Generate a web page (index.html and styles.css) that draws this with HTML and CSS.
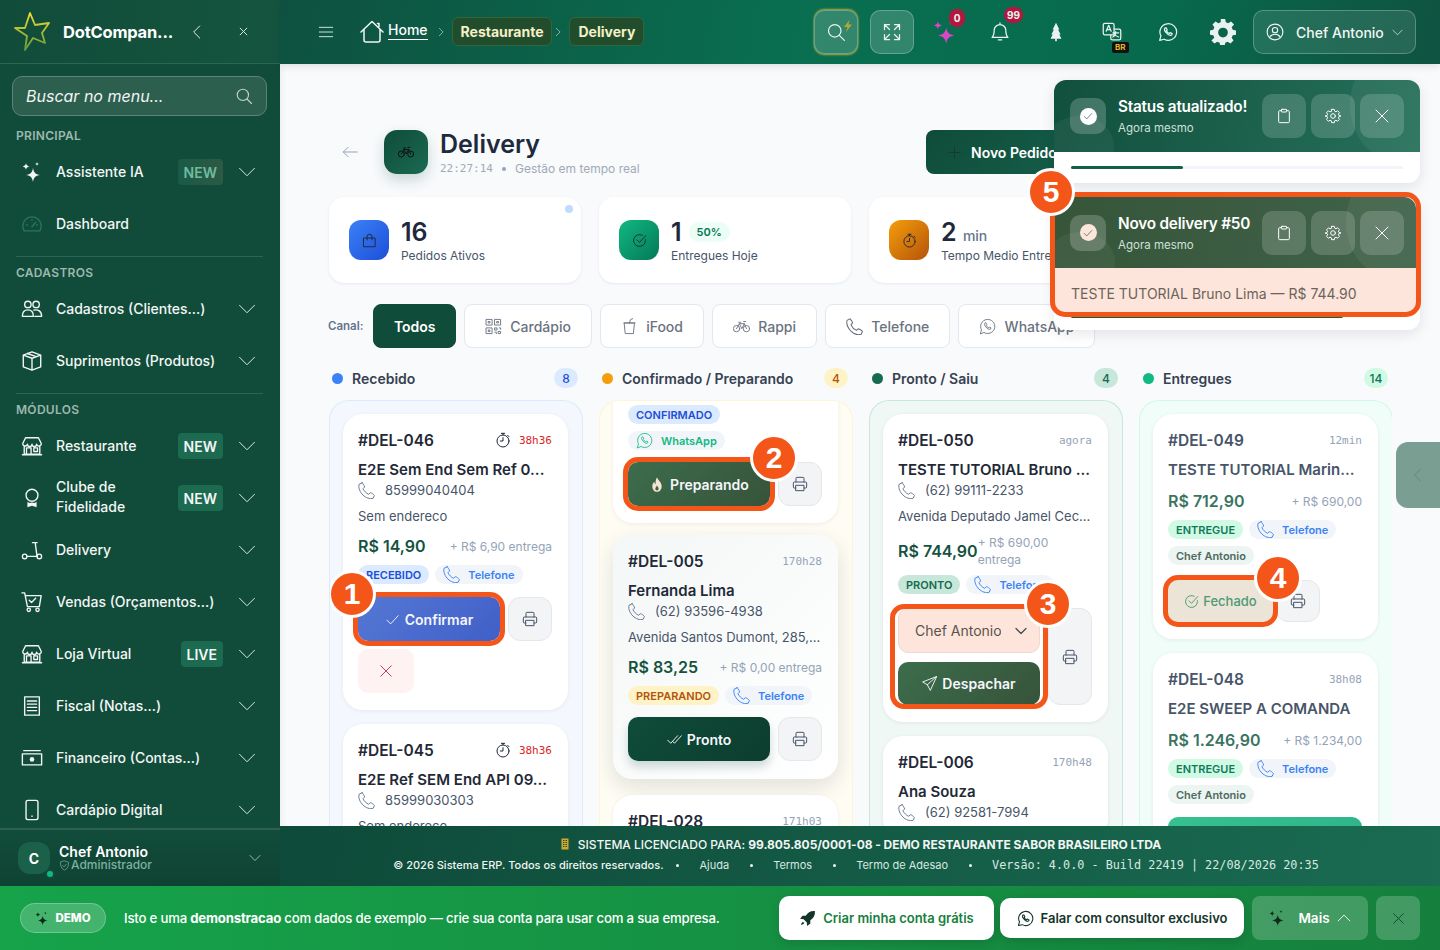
FILE: index.html
```html
<!DOCTYPE html>
<html lang="pt-BR">
<head>
    <meta charset="UTF-8">
    <meta name="viewport" content="width=device-width, initial-scale=1.0">
    <title>Delivery</title>
    <link rel="stylesheet" href="styles.css">
</head>
<body>
<svg class="sprite" xmlns="http://www.w3.org/2000/svg">
    <symbol id="i-search" viewBox="0 0 24 24"><circle cx="10.5" cy="10.5" r="7.5"/><path d="M16 16l6 6"/></symbol>
    <symbol id="i-down" viewBox="0 0 24 24"><path d="M2 7l10 10L22 7"/></symbol>
    <symbol id="i-left" viewBox="0 0 24 24"><path d="M16 3l-9 9 9 9"/></symbol>
    <symbol id="i-right" viewBox="0 0 24 24"><path d="M8 3l9 9-9 9"/></symbol>
    <symbol id="i-up" viewBox="0 0 24 24"><path d="M2 17L12 7l10 10"/></symbol>
    <symbol id="i-x" viewBox="0 0 24 24"><path d="M3 3l18 18M21 3L3 21"/></symbol>
    <symbol id="i-bolt" viewBox="0 0 24 24"><path class="solid" d="M15 0L4 14h7l-3 10 12-15h-7z"/></symbol>
    <symbol id="i-spark" viewBox="2 0 20 22"><path class="solid" d="M13 7c.8 4.6 2.4 6.2 7 7-4.6.8-6.2 2.4-7 7-.8-4.6-2.4-6.2-7-7 4.600-.8 6.200-2.400 7-7zM6 2c.4 2.200 1.200 3 3.400 3.400C7.200 5.800 6.400 6.600 6 8.800c-.4-2.200-1.200-3-3.400-3.400C4.800 5 5.600 4.200 6 2zM17 1c.3 1.400.7 1.800 2 2-1.300.2-1.700.6-2 2-.3-1.400-.7-1.800-2-2 1.300-.2 1.700-.6 2-2z"/></symbol>
    <symbol id="i-gauge" viewBox="0 0 24 24"><path d="M3.5 19.5A10 10 0 1 1 20.5 19.5z"/><path d="M12 15l4-5M6 13h1M17 13h1M12 7v1"/></symbol>
    <symbol id="i-people" viewBox="0 0 24 24"><circle cx="7.5" cy="7" r="3.5"/><circle cx="16.5" cy="7" r="3.5"/><path d="M1.5 20c0-5 2.500-7 6-7s6 2 6 7zM14 13.200c4.500-1 8.500 1 8.500 6.800H15"/></symbol>
    <symbol id="i-box" viewBox="0 0 24 24"><path d="M12 2l9.500 3.500v13L12 22l-9.500-3.500v-13zM2.500 5.500L12 9l9.500-3.500M12 9v13M7 3.800l9.500 3.500"/></symbol>
    <symbol id="i-shop" viewBox="0 0 24 24"><path d="M5 3h14l3 6a2.500 2.500 0 0 1-5 1 2.500 2.500 0 0 1-5 0 2.500 2.500 0 0 1-5 0 2.500 2.500 0 0 1-5-1zM3.500 12v9h17v-9M1.500 21.500h21M6 14h5v7H6zM14 14h4v4h-4z"/></symbol>
    <symbol id="i-award" viewBox="0 0 24 24"><circle cx="12" cy="9" r="6.5"/><path class="solid" d="M7 16l2 1.500 3-.5 3 .5 2-1.500v6l-5-1.500L7 22z"/></symbol>
    <symbol id="i-scooter" viewBox="0 0 24 24"><circle cx="4" cy="19" r="2.5"/><circle cx="20" cy="19" r="2.5"/><path d="M6.500 19h11L15.500 4M12.500 4h5"/></symbol>
    <symbol id="i-cart" viewBox="0 0 24 24"><path d="M1 2h3l3 15h13l2-12H5M9 10l2.500 2.500L16 8"/><circle cx="8.5" cy="20.5" r="1.8"/><circle cx="18" cy="20.5" r="1.8"/></symbol>
    <symbol id="i-receipt" viewBox="0 0 24 24"><path d="M4 2h16v20H4zM7 6.500h10M7 10h10M7 13.500h10M7 17h10"/></symbol>
    <symbol id="i-cash" viewBox="0 0 24 24"><path d="M3 4h18M1.500 7.500h21v12h-21z"/><circle class="solid" cx="12" cy="13.5" r="2.5"/></symbol>
    <symbol id="i-device" viewBox="0 0 24 24"><rect x="5.5" y="1.5" width="13" height="21" rx="2"/><path d="M12 18.500v.5"/></symbol>
    <symbol id="i-menu" viewBox="0 0 24 24"><path d="M2 5h20M2 12h20M2 19h20"/></symbol>
    <symbol id="i-house" viewBox="0 0 24 24"><path d="M1 12L12 1.500 23 12M4 9.500V20a2 2 0 0 0 2 2h12a2 2 0 0 0 2-2V9.500M17.500 3.500h1.500v3"/></symbol>
    <symbol id="i-expand" viewBox="0 0 24 24"><path d="M3 9V3h6M3 3l6 6M21 9V3h-6M21 3l-6 6M3 15v6h6M3 21l6-6M21 15v6h-6M21 21l-6-6"/></symbol>
    <symbol id="i-bell" viewBox="0 0 24 24"><path d="M12 3a7 7 0 0 0-7 7c0 5-1 7-2.500 8.500h19C20 17 19 15 19 10a7 7 0 0 0-7-7zM12 1v2M10 21.500h4"/></symbol>
    <symbol id="i-tree" viewBox="0 0 24 24"><path class="solid" d="M12 1l4 8h-1.500l3 6h-1.500l2.500 5H13v3h-2v-3H5.500L8 15H6.500l3-6H8z"/></symbol>
    <symbol id="i-translate" viewBox="0 0 24 24"><rect x="1.5" y="1.5" width="13" height="14" rx="2"/><path d="M5 11l3-7 3 7M6 9h4M14.500 8.500h6a2 2 0 0 1 2 2v9a2 2 0 0 1-2 2h-8a2 2 0 0 1-2-2v-4M13 13h7M16.500 11.500c0 3-1.500 5.500-3.500 6.500M15 14.500c1 2 2.500 3 5 3.500"/></symbol>
    <symbol id="i-wa" viewBox="0 0 24 24"><path d="M2 22l1.500-5.300A10 10 0 1 1 7.400 20.700z"/><path d="M8.500 7c-1 1-1 3 .8 5.300 2 2.700 4.500 4 6 3.700 1-.2 1.700-1 1.700-2l-2.500-1.200-1 1c-1.200-.4-2.800-2-3.300-3.300l.9-1L9.800 7z"/></symbol>
    <symbol id="i-cog" viewBox="0 0 24 24"><path class="solid" fill-rule="evenodd" d="M10 1h4l.6 3 2.200 1 2.600-1.700 2.800 2.800L20 8.700l1 2.200 3 .6v4l-3 .6-1 2.200 1.700 2.600-2.800 2.800-2.600-1.700-2.200 1-.6 3h-4l-.6-3-2.200-1-2.600 1.700-2.800-2.800L4 18.300 3 16.100 0 15.500v-4l3-.6 1-2.200L2.300 6.100l2.800-2.800L7.700 5l2.200-1zM12 9a4.500 4.500 0 1 0 0 9 4.500 4.500 0 0 0 0-9z" transform="translate(0 -1)"/></symbol>
    <symbol id="i-cog-thin" viewBox="0 0 24 24"><circle cx="12" cy="12" r="3.5"/><path d="M10 2h4l.5 2.800 2 .9 2.300-1.600 2.900 2.900-1.600 2.300.9 2 2.800.5v.4l-2.800.5-.9 2 1.600 2.300-2.900 2.900-2.300-1.600-2 .9-.5 2.800h-4l-.5-2.800-2-.9-2.300 1.600-2.900-2.900 1.600-2.300-.9-2-2.800-.5V12l2.800-.5.9-2-1.600-2.300 2.900-2.900 2.300 1.600 2-.9z"/></symbol>
    <symbol id="i-user" viewBox="0 0 24 24"><circle cx="12" cy="12" r="10.5"/><circle cx="12" cy="9.5" r="3.5"/><path d="M5 19c1.500-3 4-4 7-4s5.500 1 7 4"/></symbol>
    <symbol id="i-clip" viewBox="0 0 24 24"><path d="M8 4H5.500a1.500 1.500 0 0 0-1.500 1.500v15A1.500 1.500 0 0 0 5.500 22h13a1.500 1.500 0 0 0 1.500-1.500v-15A1.500 1.500 0 0 0 18.500 4H16"/><rect x="8" y="2" width="8" height="4" rx="1"/></symbol>
    <symbol id="i-bike" viewBox="0 0 24 24"><circle cx="5" cy="15" r="4.5"/><circle cx="19" cy="15" r="4.5"/><path d="M5 15l4-7h7l3 7M9 8l3.500 7L16 8M8 6h3M15 5h3"/></symbol>
    <symbol id="i-bag" viewBox="0 0 24 24"><path d="M3 8h18v14H3zM8 11V6a4 4 0 0 1 8 0v5"/></symbol>
    <symbol id="i-ok" viewBox="0 0 24 24"><path d="M21.500 10.500V12a9.500 9.500 0 1 1-5-8.400M8 11l4 4L22 4"/></symbol>
    <symbol id="i-watch" viewBox="0 0 24 24"><circle cx="12" cy="13.5" r="9"/><path d="M9.500 2h5M12 2v2.500M12 8.500v5H8M19 5l2 2"/></symbol>
    <symbol id="i-qr" viewBox="0 0 24 24"><path d="M2 2h8v8H2zM14 2h8v8h-8zM2 14h8v8H2zM5 5h2v2H5zM17 5h2v2h-2zM5 17h2v2H5zM14 14h3v3h-3zM20 14h2v2M14 20h2v2M19 19h3v3h-3z"/></symbol>
    <symbol id="i-cup" viewBox="0 0 24 24"><path d="M5 7h14l-1.500 15h-11zM4 7h16M12 7l1.500-5 3-1"/></symbol>
    <symbol id="i-tel" viewBox="2 1 21 21.500"><path d="M7 2L3 4c-1 5 1.500 10 5 13.500S17 23 21 21.500l1.500-3.500c-1.500-1.800-3.300-3-5-3.500L15 16.500C12.500 15.500 9 12 8 9.500l2.200-2.300C9.500 5.500 8.500 3.500 7 2z"/></symbol>
    <symbol id="i-print" viewBox="0 0 24 24"><path d="M6 9V3.500A1.500 1.500 0 0 1 7.500 2h9A1.500 1.500 0 0 1 18 3.500V9M6 18H3.500A1.500 1.500 0 0 1 2 16.500v-6A1.500 1.500 0 0 1 3.500 9h17a1.500 1.500 0 0 1 1.500 1.500v6a1.500 1.500 0 0 1-1.500 1.500H18M6 14h12v8H6z"/></symbol>
    <symbol id="i-fire" viewBox="0 0 24 24"><path class="solid" fill-rule="evenodd" d="M12 1c1 4 7 7 7 13.500C19 19 16 23 12 23s-7-4-7-8.500c0-3 1.500-5 3-6.500 0 2 .8 3 2 3.500C9.500 7 10.500 4 12 1zm0 12c-.5 2-2.500 3-2.500 5.500 0 1.500 1 2.500 2.500 2.500s2.500-1 2.500-2.500c0-2.500-2-3.500-2.500-5.500z"/></symbol>
    <symbol id="i-check" viewBox="0 0 24 24"><path d="M3 13l6 6L21 6"/></symbol>
    <symbol id="i-checks" viewBox="0 0 24 24"><path d="M1 13l5 5L17 6M9 15l3 3L23 6"/></symbol>
    <symbol id="i-send" viewBox="0 0 24 24"><path d="M23 1L1 9.500l7.500 4.500L13 22.500zM23 1L8.500 14"/></symbol>
    <symbol id="i-plus" viewBox="0 0 24 24"><path d="M12 2v20M2 12h20"/></symbol>
    <symbol id="i-back" viewBox="0 0 24 24"><path d="M23 12H2M9 5l-7 7 7 7"/></symbol>
    <symbol id="i-rocket" viewBox="0 0 24 24"><path class="solid" d="M22.500 1.500c-6-.5-10 2-13 6.500H5l-3.500 4.500 5 .5 4.500 4.500.5 5 4.500-3.500v-4.500c4.500-3 7-7 6.500-13zM5.500 16.500c-1.500 1-2.500 3-2.500 4.500 1.500 0 3.500-1 4.500-2.500z"/></symbol>
    <symbol id="i-shield" viewBox="0 0 24 24"><path d="M12 2l9 3c0 8-2 14-9 17C5 19 3 13 3 5zM8 12l3 3 5-6"/></symbol>
    <symbol id="i-building" viewBox="0 0 24 24"><path class="solid" fill-rule="evenodd" d="M5 1h14v22H5zM8 4v2h3V4zm5 0v2h3V4zM8 8v2h3V8zm5 0v2h3V8zm-5 4v2h3v-2zm5 0v2h3v-2zm-5 4v2h3v-2zm5 0v2h3v-2z"/></symbol>
    <linearGradient id="star-grad" x1="0" y1="0" x2="0" y2="1"><stop offset="0" stop-color="#f2e02e"/><stop offset="1" stop-color="#5e9a3a"/></linearGradient>
</svg>

<div class="app">
    <aside class="sidebar">
        <div class="side-head">
            <svg class="logo" viewBox="0 0 40 40"><path d="M17 1l5 12 14-2-7 10 3 10-12-5-8 12 2-14L2 16l10 0z" fill="none" stroke="url(#star-grad)" stroke-width="1.800" stroke-linejoin="round"/></svg>
            <span class="brand">DotCompan...</span>
            <svg class="ic side-collapse"><use href="#i-left"/></svg>
            <svg class="ic side-close"><use href="#i-x"/></svg>
        </div>
        <div class="side-search">
            <span>Buscar no menu...</span>
            <svg class="ic"><use href="#i-search"/></svg>
        </div>
        <nav class="side-nav">
            <div class="nav-label">PRINCIPAL</div>
            <a class="nav-item"><svg class="ic"><use href="#i-spark"/></svg><span class="nav-text">Assistente IA</span><span class="tag tag-dim">NEW</span><svg class="ic nav-arrow"><use href="#i-down"/></svg></a>
            <a class="nav-item"><svg class="ic ic-dim"><use href="#i-gauge"/></svg><span class="nav-text">Dashboard</span></a>
            <div class="nav-sep"></div>
            <div class="nav-label">CADASTROS</div>
            <a class="nav-item"><svg class="ic"><use href="#i-people"/></svg><span class="nav-text">Cadastros (Clientes...)</span><svg class="ic nav-arrow"><use href="#i-down"/></svg></a>
            <a class="nav-item"><svg class="ic"><use href="#i-box"/></svg><span class="nav-text">Suprimentos (Produtos)</span><svg class="ic nav-arrow"><use href="#i-down"/></svg></a>
            <div class="nav-sep"></div>
            <div class="nav-label">MÓDULOS</div>
            <a class="nav-item"><svg class="ic"><use href="#i-shop"/></svg><span class="nav-text">Restaurante</span><span class="tag">NEW</span><svg class="ic nav-arrow"><use href="#i-down"/></svg></a>
            <a class="nav-item"><svg class="ic"><use href="#i-award"/></svg><span class="nav-text nav-wrap">Clube de Fidelidade</span><span class="tag">NEW</span><svg class="ic nav-arrow"><use href="#i-down"/></svg></a>
            <a class="nav-item"><svg class="ic"><use href="#i-scooter"/></svg><span class="nav-text">Delivery</span><svg class="ic nav-arrow"><use href="#i-down"/></svg></a>
            <a class="nav-item"><svg class="ic"><use href="#i-cart"/></svg><span class="nav-text">Vendas (Orçamentos...)</span><svg class="ic nav-arrow"><use href="#i-down"/></svg></a>
            <a class="nav-item"><svg class="ic"><use href="#i-shop"/></svg><span class="nav-text">Loja Virtual</span><span class="tag">LIVE</span><svg class="ic nav-arrow"><use href="#i-down"/></svg></a>
            <a class="nav-item"><svg class="ic"><use href="#i-receipt"/></svg><span class="nav-text">Fiscal (Notas...)</span><svg class="ic nav-arrow"><use href="#i-down"/></svg></a>
            <a class="nav-item"><svg class="ic"><use href="#i-cash"/></svg><span class="nav-text">Financeiro (Contas...)</span><svg class="ic nav-arrow"><use href="#i-down"/></svg></a>
            <a class="nav-item"><svg class="ic"><use href="#i-device"/></svg><span class="nav-text">Cardápio Digital</span><svg class="ic nav-arrow"><use href="#i-down"/></svg></a>
        </nav>
        <div class="side-user">
            <div class="avatar">C<span class="online"></span></div>
            <div class="user-info">
                <strong>Chef Antonio</strong>
                <span><svg class="ic"><use href="#i-shield"/></svg>Administrador</span>
            </div>
            <svg class="ic user-arrow"><use href="#i-down"/></svg>
        </div>
    </aside>

    <div class="main">
        <header class="topbar">
            <svg class="ic top-menu"><use href="#i-menu"/></svg>
            <div class="crumbs">
                <svg class="ic crumb-home"><use href="#i-house"/></svg>
                <a class="crumb-link">Home</a>
                <svg class="ic crumb-sep"><use href="#i-right"/></svg>
                <span class="crumb-chip">Restaurante</span>
                <svg class="ic crumb-sep crumb-sep-2"><use href="#i-right"/></svg>
                <span class="crumb-chip">Delivery</span>
            </div>
            <div class="top-actions">
                <button class="top-btn top-btn-glow"><svg class="ic"><use href="#i-search"/></svg><svg class="ic bolt"><use href="#i-bolt"/></svg></button>
                <button class="top-btn"><svg class="ic"><use href="#i-expand"/></svg></button>
                <span class="top-icon top-icon-first"><svg class="ic spark-pink"><use href="#i-spark"/></svg><span class="count count-zero">0</span></span>
                <span class="top-icon"><svg class="ic"><use href="#i-bell"/></svg><span class="count">99</span></span>
                <span class="top-icon"><svg class="ic"><use href="#i-tree"/></svg></span>
                <span class="top-icon"><svg class="ic"><use href="#i-translate"/></svg><span class="lang">BR</span></span>
                <span class="top-icon"><svg class="ic"><use href="#i-wa"/></svg></span>
                <span class="top-icon top-icon-cog"><svg class="ic top-cog"><use href="#i-cog"/></svg></span>
                <button class="top-user"><svg class="ic"><use href="#i-user"/></svg><span>Chef Antonio</span><svg class="ic top-user-arrow"><use href="#i-down"/></svg></button>
            </div>
        </header>

        <main class="content">
            <section class="page-head">
                <svg class="ic back"><use href="#i-back"/></svg>
                <div class="page-icon"><svg class="ic"><use href="#i-bike"/></svg></div>
                <div class="page-title">
                    <h1>Delivery</h1>
                    <p><span class="clock">22:27:14</span><i></i>Gestão em tempo real</p>
                </div>
                <button class="new-order"><svg class="ic"><use href="#i-plus"/></svg>Novo Pedido</button>
            </section>

            <section class="stats">
                <div class="stat">
                    <div class="stat-icon stat-blue"><svg class="ic"><use href="#i-bag"/></svg></div>
                    <div><div class="stat-num">16</div><div class="stat-label">Pedidos Ativos</div></div>
                    <span class="stat-dot"></span>
                </div>
                <div class="stat">
                    <div class="stat-icon stat-green"><svg class="ic"><use href="#i-ok"/></svg></div>
                    <div><div class="stat-num">1<span class="stat-pct">50%</span></div><div class="stat-label">Entregues Hoje</div></div>
                </div>
                <div class="stat">
                    <div class="stat-icon stat-orange"><svg class="ic"><use href="#i-watch"/></svg></div>
                    <div><div class="stat-num">2 <small>min</small></div><div class="stat-label">Tempo Medio Entrega</div></div>
                </div>
            </section>

            <section class="channels">
                <span class="channels-label">Canal:</span>
                <button class="channel channel-on">Todos</button>
                <button class="channel"><svg class="ic"><use href="#i-qr"/></svg>Cardápio</button>
                <button class="channel"><svg class="ic"><use href="#i-cup"/></svg>iFood</button>
                <button class="channel"><svg class="ic"><use href="#i-bike"/></svg>Rappi</button>
                <button class="channel"><svg class="ic"><use href="#i-tel"/></svg>Telefone</button>
                <button class="channel"><svg class="ic"><use href="#i-wa"/></svg>WhatsApp</button>
            </section>

            <section class="board">
                <div class="col col-blue">
                    <div class="col-head"><span class="col-dot"></span><span class="col-name">Recebido</span><span class="col-count">8</span></div>
                    <div class="col-body">
                        <article class="card">
                            <div class="card-top"><span class="card-id">#DEL-046</span><svg class="ic late-ic"><use href="#i-watch"/></svg><span class="card-time late">38h36</span></div>
                            <div class="card-name">E2E Sem End Sem Ref 0...</div>
                            <div class="card-phone"><svg class="ic"><use href="#i-tel"/></svg>85999040404</div>
                            <div class="card-addr">Sem endereco</div>
                            <div class="card-price"><strong>R$ 14,90</strong><span>+ R$ 6,90 entrega</span></div>
                            <div class="chips"><span class="chip chip-blue">RECEBIDO</span><span class="chip chip-src"><svg class="ic"><use href="#i-tel"/></svg>Telefone</span></div>
                            <div class="actions">
                                <button class="act act-blue hl"><svg class="ic"><use href="#i-check"/></svg>Confirmar<span class="step step-1">1</span></button>
                                <button class="print"><svg class="ic"><use href="#i-print"/></svg></button>
                                <button class="cancel"><svg class="ic"><use href="#i-x"/></svg></button>
                            </div>
                        </article>
                        <article class="card">
                            <div class="card-top"><span class="card-id">#DEL-045</span><svg class="ic late-ic"><use href="#i-watch"/></svg><span class="card-time late">38h36</span></div>
                            <div class="card-name">E2E Ref SEM End API 09...</div>
                            <div class="card-phone"><svg class="ic"><use href="#i-tel"/></svg>85999030303</div>
                            <div class="card-addr">Sem endereco</div>
                        </article>
                    </div>
                </div>

                <div class="col col-amber">
                    <div class="col-head"><span class="col-dot"></span><span class="col-name">Confirmado / Preparando</span><span class="col-count">4</span></div>
                    <div class="col-body col-body-cut">
                        <article class="card card-cut">
                            <div class="chips chips-first"><span class="chip chip-blue">CONFIRMADO</span></div>
                            <div class="chips"><span class="chip chip-src chip-wa"><svg class="ic"><use href="#i-wa"/></svg>WhatsApp</span></div>
                            <div class="actions actions-tight">
                                <button class="act act-green hl"><svg class="ic ic-fire"><use href="#i-fire"/></svg>Preparando<span class="step step-2">2</span></button>
                                <button class="print"><svg class="ic"><use href="#i-print"/></svg></button>
                            </div>
                        </article>
                        <article class="card card-hover">
                            <div class="card-top"><span class="card-id">#DEL-005</span><span class="card-time">170h28</span></div>
                            <div class="card-name">Fernanda Lima</div>
                            <div class="card-phone"><svg class="ic"><use href="#i-tel"/></svg>(62) 93596-4938</div>
                            <div class="card-addr">Avenida Santos Dumont, 285,...</div>
                            <div class="card-price"><strong>R$ 83,25</strong><span>+ R$ 0,00 entrega</span></div>
                            <div class="chips"><span class="chip chip-amber">PREPARANDO</span><span class="chip chip-src"><svg class="ic"><use href="#i-tel"/></svg>Telefone</span></div>
                            <div class="actions actions-tight">
                                <button class="act act-dark"><svg class="ic"><use href="#i-checks"/></svg>Pronto</button>
                                <button class="print"><svg class="ic"><use href="#i-print"/></svg></button>
                            </div>
                        </article>
                        <article class="card">
                            <div class="card-top"><span class="card-id">#DEL-028</span><span class="card-time">171h03</span></div>
                        </article>
                    </div>
                </div>

                <div class="col col-green">
                    <div class="col-head"><span class="col-dot"></span><span class="col-name">Pronto / Saiu</span><span class="col-count">4</span></div>
                    <div class="col-body">
                        <article class="card">
                            <div class="card-top"><span class="card-id">#DEL-050</span><span class="card-time">agora</span></div>
                            <div class="card-name">TESTE TUTORIAL Bruno ...</div>
                            <div class="card-phone"><svg class="ic"><use href="#i-tel"/></svg>(62) 99111-2233</div>
                            <div class="card-addr">Avenida Deputado Jamel Cec...</div>
                            <div class="card-price card-price-wrap"><strong>R$ 744,90</strong><span>+ R$ 690,00 entrega</span></div>
                            <div class="chips"><span class="chip chip-teal">PRONTO</span><span class="chip chip-src"><svg class="ic"><use href="#i-tel"/></svg>Telefone</span></div>
                            <div class="actions actions-stretch">
                                <div class="dispatch">
                                    <div class="driver"><span>Chef Antonio</span><svg class="ic"><use href="#i-down"/></svg></div>
                                    <button class="act act-green"><svg class="ic"><use href="#i-send"/></svg>Despachar</button>
                                    <span class="step step-3">3</span>
                                </div>
                                <button class="print"><svg class="ic"><use href="#i-print"/></svg></button>
                            </div>
                        </article>
                        <article class="card">
                            <div class="card-top"><span class="card-id">#DEL-006</span><span class="card-time">170h48</span></div>
                            <div class="card-name">Ana Souza</div>
                            <div class="card-phone"><svg class="ic"><use href="#i-tel"/></svg>(62) 92581-7994</div>
                        </article>
                    </div>
                </div>

                <div class="col col-mint">
                    <div class="col-head"><span class="col-dot"></span><span class="col-name">Entregues</span><span class="col-count">14</span></div>
                    <div class="col-body">
                        <article class="card card-done">
                            <div class="card-top"><span class="card-id">#DEL-049</span><span class="card-time">12min</span></div>
                            <div class="card-name">TESTE TUTORIAL Marin...</div>
                            <div class="card-price card-price-first"><strong>R$ 712,90</strong><span>+ R$ 690,00</span></div>
                            <div class="chips"><span class="chip chip-mint">ENTREGUE</span><span class="chip chip-src"><svg class="ic"><use href="#i-tel"/></svg>Telefone</span></div>
                            <div class="chips"><span class="chip chip-gray">Chef Antonio</span></div>
                            <div class="actions actions-done">
                                <button class="act act-closed hl"><svg class="ic"><use href="#i-ok"/></svg>Fechado<span class="step step-4">4</span></button>
                                <button class="print"><svg class="ic"><use href="#i-print"/></svg></button>
                            </div>
                        </article>
                        <article class="card card-done">
                            <div class="card-top"><span class="card-id">#DEL-048</span><span class="card-time">38h08</span></div>
                            <div class="card-name">E2E SWEEP A COMANDA</div>
                            <div class="card-price card-price-first"><strong>R$ 1.246,90</strong><span>+ R$ 1.234,00</span></div>
                            <div class="chips"><span class="chip chip-mint">ENTREGUE</span><span class="chip chip-src"><svg class="ic"><use href="#i-tel"/></svg>Telefone</span></div>
                            <div class="chips"><span class="chip chip-gray">Chef Antonio</span></div>
                            <div class="act-strip"></div>
                        </article>
                    </div>
                </div>
            </section>
        </main>

        <footer class="footer">
            <div class="foot-license"><svg class="ic"><use href="#i-building"/></svg><span>SISTEMA LICENCIADO PARA: <b>99.805.805/0001-08 - DEMO RESTAURANTE SABOR BRASILEIRO LTDA</b></span></div>
            <div class="foot-links">
                <span class="foot-copy">© 2026 Sistema ERP. Todos os direitos reservados.</span><i></i>
                <a>Ajuda</a><i></i>
                <a>Termos</a><i></i>
                <a>Termo de Adesao</a><i></i>
                <span class="foot-ver">Versão: 4.0.0 - Build 22419 | 22/08/2026 20:35</span>
            </div>
        </footer>

        <!-- toasts float over the page, tutorial highlights one of them -->
        <div class="toasts">
            <div class="toast">
                <div class="toast-head">
                    <div class="toast-check"><span><svg class="ic"><use href="#i-check"/></svg></span></div>
                    <div class="toast-text"><strong>Status atualizado!</strong><span>Agora mesmo</span></div>
                    <button class="toast-btn"><svg class="ic"><use href="#i-clip"/></svg></button>
                    <button class="toast-btn"><svg class="ic"><use href="#i-cog-thin"/></svg></button>
                    <button class="toast-btn"><svg class="ic"><use href="#i-x"/></svg></button>
                </div>
                <div class="toast-bar"><span class="toast-fill-1"></span></div>
            </div>
            <div class="toast">
                <div class="toast-focus">
                    <div class="toast-head toast-head-focus">
                        <div class="toast-check"><span><svg class="ic"><use href="#i-check"/></svg></span></div>
                        <div class="toast-text"><strong>Novo delivery #50</strong><span>Agora mesmo</span></div>
                        <button class="toast-btn"><svg class="ic"><use href="#i-clip"/></svg></button>
                        <button class="toast-btn"><svg class="ic"><use href="#i-cog-thin"/></svg></button>
                        <button class="toast-btn"><svg class="ic"><use href="#i-x"/></svg></button>
                    </div>
                    <div class="toast-msg">TESTE TUTORIAL Bruno Lima — R$ 744.90</div>
                    <span class="step step-5">5</span>
                </div>
                <div class="toast-bar toast-bar-2"><span class="toast-fill-2"></span></div>
            </div>
        </div>
        <div class="side-handle"><svg class="ic"><use href="#i-left"/></svg></div>
    </div>
</div>

<div class="demo-bar">
    <span class="demo-pill"><svg class="ic"><use href="#i-spark"/></svg>DEMO</span>
    <p class="demo-text">Isto e uma <b>demonstracao</b> com dados de exemplo — crie sua conta para usar com a sua empresa.</p>
    <button class="demo-btn demo-create"><svg class="ic"><use href="#i-rocket"/></svg>Criar minha conta grátis</button>
    <button class="demo-btn demo-talk"><svg class="ic"><use href="#i-wa"/></svg>Falar com consultor exclusivo</button>
    <button class="demo-ghost demo-more"><svg class="ic"><use href="#i-spark"/></svg>Mais<svg class="ic"><use href="#i-up"/></svg></button>
    <button class="demo-ghost demo-x"><svg class="ic"><use href="#i-x"/></svg></button>
</div>
</body>
</html>
```

FILE: styles.css
```css
* {
    box-sizing: border-box;
}

html, body {
    height: 100%;
    margin: 0;
    font-family: Inter, "Liberation Sans", sans-serif;
    overflow: hidden;
    color: #1f2937;
}

body {
    display: flex;
    flex-direction: column;
    background: #f8fafc;
}

.sprite {
    position: absolute;
    width: 0;
    height: 0;
}

button {
    font-family: inherit;
    border: none;
    cursor: pointer;
}

.ic {
    width: 20px;
    height: 20px;
    fill: none;
    stroke: currentColor;
    stroke-width: 1.5;
    stroke-linecap: round;
    stroke-linejoin: round;
    flex: none;
}

.solid {
    fill: currentColor;
    stroke: none;
}

.app {
    flex: 1;
    min-height: 0;
    display: flex;
}

/* sidebar */
.sidebar {
    width: 280px;
    flex: none;
    display: flex;
    flex-direction: column;
    background: #114c3a;
    color: #fff;
}

.side-head {
    height: 64px;
    flex: none;
    display: flex;
    align-items: center;
    padding-left: 13px;
    border-bottom: 1px solid #2d6553;
    background: linear-gradient(90deg, #114c3a, #15553f);
}

.logo {
    width: 40px;
    height: 40px;
    flex: none;
}

.brand {
    margin-left: 10px;
    width: 116px;
    font-size: 16.5px;
    font-weight: 700;
    letter-spacing: -0.2px;
    white-space: nowrap;
}

.side-collapse {
    width: 16px;
    height: 16px;
    margin-left: 10px;
    color: #e6eeeb;
}

.side-close {
    width: 9px;
    height: 9px;
    margin-left: 34px;
    color: #e6eeeb;
    stroke-width: 2.5;
}

.side-search {
    flex: none;
    height: 40px;
    margin: 12px 13px 0 12px;
    padding: 0 13px;
    display: flex;
    align-items: center;
    justify-content: space-between;
    background: #2d5f4f;
    border: 1px solid #5a8576;
    border-radius: 10px;
    font-size: 16px;
    font-style: italic;
    color: #f1f5f3;
}

.side-search .ic {
    width: 18px;
    height: 18px;
    color: #c3d3cd;
}

.side-nav {
    flex: 1;
    min-height: 0;
    overflow: hidden;
    padding-top: 11px;
}

.nav-label {
    height: 16px;
    margin: 0 16px 3px;
    font-size: 12px;
    font-weight: 600;
    line-height: 18px;
    letter-spacing: 0.3px;
    color: #9db8ae;
}

.nav-sep {
    height: 1px;
    margin: 6px 17px 7px 16px;
    background: #2c6553;
}

.nav-item {
    height: 52px;
    display: flex;
    align-items: center;
    padding: 0 24px 0 21px;
    font-size: 14px;
    font-weight: 550;
    color: #f3f6f5;
}

.nav-item > .ic:first-child {
    width: 22px;
    height: 22px;
}

.nav-item > .ic-dim:first-child {
    color: #2a7560;
}

.nav-text {
    margin-left: 13px;
    margin-bottom: 2px;
    flex: 1;
    white-space: nowrap;
}

.nav-wrap {
    white-space: normal;
    line-height: 20px;
    padding-right: 30px;
}

.nav-arrow {
    width: 18px;
    height: 18px;
    margin-left: 15px;
    color: #dfe9e5;
    stroke-width: 1.3;
}

.tag {
    height: 26px;
    padding: 0 6px;
    display: flex;
    align-items: center;
    border-radius: 4px;
    background: #1c6a50;
    font-size: 14px;
    font-weight: 600;
}

.tag-dim {
    color: #6fbba1;
    background: linear-gradient(90deg, #1a5a45, #2d5a44);
}

.side-user {
    flex: none;
    height: 58px;
    display: flex;
    align-items: center;
    padding: 0 18px;
    border-top: 2px solid #2c6150;
    background: linear-gradient(180deg, #114c3a, #0f4334);
}

.avatar {
    position: relative;
    width: 32px;
    height: 32px;
    display: flex;
    align-items: center;
    justify-content: center;
    border-radius: 12px;
    background: #1b6049;
    font-size: 14px;
    font-weight: 700;
}

.online {
    position: absolute;
    right: -5px;
    bottom: -5px;
    width: 10px;
    height: 10px;
    border-radius: 50%;
    background: #10b981;
    border: 2px solid #114c3a;
}

.user-info {
    margin-left: 9px;
    flex: 1;
}

.user-info strong {
    display: block;
    font-size: 14px;
    line-height: 14px;
    font-weight: 600;
}

.user-info span {
    display: flex;
    align-items: center;
    gap: 1px;
    font-size: 12px;
    line-height: 12px;
    font-weight: 500;
    color: #7fb09e;
}

.user-info .ic {
    width: 11px;
    height: 11px;
}

.user-arrow {
    width: 12px;
    height: 12px;
    color: #c9d8d2;
    margin-right: 1px;
}

/* main column */
.main {
    position: relative;
    flex: 1;
    min-width: 0;
    display: flex;
    flex-direction: column;
}

.topbar {
    height: 64px;
    flex: none;
    display: flex;
    align-items: center;
    padding-left: 38px;
    color: #fff;
    background: linear-gradient(100deg, #0e5140 0%, #096f50 45%, #076a4c 75%, #0f5341 100%);
    box-shadow: 0 2px 8px rgba(0, 0, 0, 0.12);
    z-index: 2;
}

.top-menu {
    width: 16px;
    height: 16px;
    color: #cfe0da;
}

.crumbs {
    margin-left: 26px;
    display: flex;
    align-items: center;
    font-size: 14px;
    font-weight: 600;
}

.crumb-home {
    width: 24px;
    height: 24px;
    color: #f2f6f4;
}

.crumb-link {
    margin-left: 4px;
    padding-bottom: 1px;
    border-bottom: 1px solid #fff;
    line-height: 16px;
    font-weight: 500;
    transform: translateY(-1px);
}

.crumb-sep {
    width: 10px;
    height: 10px;
    margin: 0 6px 0 8px;
    color: #d5e3dd;
}

.crumb-sep-2 {
    margin-left: 1px;
}

.crumb-chip {
    height: 29px;
    margin-top: -2px;
    padding: 0 8px;
    display: flex;
    align-items: center;
    border-radius: 6px;
    font-weight: 700;
    color: #f6f0c8;
    background: #224d2c;
    border: 1px solid #32673d;
}

.top-actions {
    margin-left: auto;
    margin-right: 24px;
    display: flex;
    align-items: center;
}

.top-btn {
    position: relative;
    width: 44px;
    height: 44px;
    margin-right: 12px;
    display: flex;
    align-items: center;
    justify-content: center;
    color: #eaf2ef;
    background: rgba(255, 255, 255, 0.17);
    border: 1px solid rgba(255, 255, 255, 0.25);
    border-radius: 10px;
}

.top-btn .ic {
    width: 20px;
    height: 20px;
}

.top-btn-glow {
    box-shadow: 0 1px 2px #b6a83a, 0 -1px 2px #b6a83a;
}

.top-btn .bolt {
    position: absolute;
    top: 8px;
    right: 3px;
    width: 12px;
    height: 14px;
    color: #b5a534;
}

.top-icon {
    position: relative;
    width: 56px;
    height: 44px;
    display: flex;
    align-items: center;
    justify-content: center;
    color: #eaf2ef;
}

.top-icon-first {
    margin-left: -9px;
    margin-right: -1px;
}

.top-icon-cog {
    width: 53px;
}

.top-cog {
    width: 26px;
    height: 26px;
}

.spark-pink {
    width: 24px;
    height: 26px;
    color: #d946c8;
}

.count {
    position: absolute;
    top: -3px;
    left: 32px;
    height: 16px;
    min-width: 16px;
    padding: 0 3px;
    display: flex;
    align-items: center;
    justify-content: center;
    border-radius: 8px;
    font-size: 10px;
    font-weight: 700;
    background: #b3173f;
}

.count-zero {
    height: 18px;
    top: -1px;
    left: 32px;
}

.lang {
    position: absolute;
    left: 28px;
    bottom: 1px;
    height: 11px;
    padding: 0 3px;
    border-radius: 2px;
    background: #111;
    color: #e0b62c;
    font-size: 8px;
    font-weight: 700;
    line-height: 11px;
}

.top-user {
    margin-left: 4px;
    width: 163px;
    height: 44px;
    display: flex;
    align-items: center;
    padding: 0 12px;
    color: #f3f6f5;
    background: rgba(255, 255, 255, 0.1);
    border: 1px solid rgba(255, 255, 255, 0.25);
    border-radius: 10px;
    font-size: 14px;
    font-weight: 500;
}

.top-user > .ic:first-child {
    width: 18px;
    height: 18px;
    margin-right: 12px;
}

.top-user-arrow {
    width: 11px;
    height: 11px;
    margin-left: 8px;
}

.content {
    flex: 1;
    min-height: 0;
    display: flex;
    flex-direction: column;
    padding: 66px 48px 0 48px;
    overflow: hidden;
    background: #f8fafc;
    box-shadow: inset 8px 0 8px -8px rgba(0, 0, 0, 0.08);
}

.page-head {
    height: 44px;
    flex: none;
    display: flex;
    align-items: center;
}

.back {
    width: 16px;
    height: 16px;
    margin-left: 14px;
    color: #94a3b8;
}

.page-icon {
    width: 44px;
    height: 44px;
    margin-left: 26px;
    display: flex;
    align-items: center;
    justify-content: center;
    border-radius: 13px;
    background: linear-gradient(135deg, #0f4c3a, #1a6a51);
    box-shadow: 0 6px 14px rgba(15, 76, 58, 0.2);
    color: #111;
}

.page-icon .ic {
    width: 16px;
    height: 16px;
}

.page-title {
    margin-left: 12px;
    padding-top: 2px;
}

.page-title h1 {
    margin: 0;
    font-size: 25px;
    font-weight: 600;
    line-height: 30px;
    color: #1e293b;
}

.page-title p {
    margin: 1px 0 0;
    display: flex;
    align-items: center;
    font-size: 12px;
    line-height: 18px;
    color: #a1a9b8;
}

.clock {
    font-family: "DejaVu Sans Mono", monospace;
    font-size: 11px;
}

.page-title i {
    width: 4px;
    height: 4px;
    margin: 0 9px;
    border-radius: 50%;
    background: #94a3b8;
}

.new-order {
    margin-left: auto;
    margin-right: 298px;
    width: 168px;
    height: 44px;
    display: flex;
    align-items: center;
    padding-left: 22px;
    gap: 10px;
    border-radius: 8px;
    font-size: 14px;
    font-weight: 600;
    color: #fff;
    background: linear-gradient(135deg, #0f4c3a, #15604a);
}

.new-order .ic {
    width: 13px;
    height: 13px;
    color: #15392c;
}

.stats {
    margin: 23px 1px 0;
    height: 86px;
    flex: none;
    display: grid;
    grid-template-columns: repeat(4, 1fr);
    gap: 18px;
}

.stat {
    position: relative;
    display: flex;
    align-items: center;
    padding: 0 20px;
    gap: 12px;
    background: #fff;
    border-radius: 15px;
    box-shadow: 0 1px 3px rgba(15, 23, 42, 0.08);
}

.stat-icon {
    width: 40px;
    height: 40px;
    flex: none;
    display: flex;
    align-items: center;
    justify-content: center;
    border-radius: 12px;
    color: #1f2937;
}

.stat-icon .ic {
    width: 15px;
    height: 15px;
}

.stat-blue {
    background: linear-gradient(135deg, #3b82f6, #1d4ed8);
}

.stat-green {
    background: linear-gradient(135deg, #10b981, #047857);
}

.stat-orange {
    background: linear-gradient(135deg, #f59e0b, #b45309);
}

.stat-num {
    display: flex;
    align-items: baseline;
    height: 30px;
    font-size: 25px;
    font-weight: 600;
    line-height: 30px;
    color: #1e293b;
    white-space: pre;
}

.stat-num small {
    font-size: 14px;
    font-weight: 500;
    color: #64748b;
}

.stat-pct {
    margin-left: 7px;
    padding: 0 8px;
    height: 20px;
    display: flex;
    align-items: center;
    align-self: center;
    border-radius: 10px;
    font-size: 11px;
    font-weight: 600;
    color: #047857;
    background: #ecfdf5;
}

.stat-label {
    margin-top: 1px;
    font-size: 12px;
    line-height: 16px;
    color: #475569;
    white-space: nowrap;
}

.stat-dot {
    position: absolute;
    top: 8px;
    right: 8px;
    width: 8px;
    height: 8px;
    border-radius: 50%;
    background: #bfdbfe;
}

.channels {
    margin-top: 21px;
    height: 44px;
    flex: none;
    display: flex;
    align-items: center;
    gap: 8px;
}

.channels-label {
    font-size: 11.5px;
    font-weight: 600;
    color: #64748b;
    margin-right: 2px;
}

.channel {
    height: 44px;
    display: flex;
    align-items: center;
    gap: 8.25px;
    padding: 0 20px;
    background: #fff;
    border: 1px solid #e2e8f0;
    border-radius: 8px;
    font-size: 14px;
    font-weight: 500;
    color: #6b7280;
}

.channel .ic {
    width: 17px;
    height: 17px;
    stroke-width: 1.3;
}

.channel-on {
    padding: 0 19.5px;
    font-weight: 600;
    color: #fff;
    background: #0f4c3a;
    border-color: #0f4c3a;
}

/* kanban */
.board {
    flex: 1;
    min-height: 0;
    margin-left: 1px;
    margin-top: 12px;
    display: grid;
    grid-template-columns: repeat(4, 254px);
    gap: 16px;
    overflow: hidden;
}

.col {
    min-width: 0;
    min-height: 0;
    display: flex;
    flex-direction: column;
}

.col-head {
    height: 36px;
    margin-bottom: 4px;
    flex: none;
    display: flex;
    align-items: center;
    padding: 0 3px;
    font-size: 14px;
    font-weight: 600;
    color: #374151;
}

.col-mint .col-head {
    padding-left: 4px;
}

.col-dot {
    width: 11px;
    height: 11px;
    border-radius: 50%;
    margin-right: 9px;
}

.col-name {
    flex: 1;
    white-space: nowrap;
}

.col-count {
    min-width: 24px;
    height: 20px;
    margin-right: 2px;
    padding: 0 5px;
    display: flex;
    align-items: center;
    justify-content: center;
    border-radius: 10px;
    font-size: 12px;
    font-weight: 500;
}

.col-body {
    flex: 1;
    min-height: 0;
    overflow: hidden;
    display: flex;
    flex-direction: column;
    gap: 14px;
    padding: 13px 14px 0 13px;
    border: 1px solid;
    border-bottom: none;
    border-radius: 20px 20px 0 0;
}

.col-body-cut {
    padding-top: 0;
}

.col-blue .col-dot { background: #3b82f6; }
.col-blue .col-count { background: #dbeafe; color: #1d4ed8; }
.col-blue .col-body { background: #f4f8fe; border-color: #dbeafe; }

.col-amber .col-dot { background: #f59e0b; }
.col-amber .col-count { background: #fef3c7; color: #b45309; }
.col-amber .col-body { background: #fefcf3; border-color: #fdf5d3; }

.col-green .col-dot { background: #166a50; }
.col-green .col-count { background: #c6e7da; color: #166a50; }
.col-green .col-body { background: #eff8f5; border-color: #c6e7da; }

.col-mint .col-dot { background: #10b981; }
.col-mint .col-count { background: #d1fae5; color: #047857; }
.col-mint .col-body { background: #f0fdf8; border-color: #d1fae5; }

.card {
    flex: none;
    padding: 16px 16px 17px 15px;
    background: #fff;
    border-radius: 20px;
    box-shadow: 0 1px 4px rgba(15, 23, 42, 0.07);
}

.card-cut {
    padding-top: 4px;
    border-radius: 0 0 20px 20px;
}

.card-hover {
    margin-top: -2px;
    margin-bottom: 2px;
    padding-bottom: 18px;
    background: linear-gradient(135deg, #f4f7f7, #ffffff);
    box-shadow: 0 8px 22px rgba(15, 23, 42, 0.12);
}

.card-done {
    color: #475569;
}

.card-top {
    display: flex;
    align-items: center;
    height: 20px;
}

.card-id {
    flex: 1;
    font-size: 15.5px;
    font-weight: 600;
}

.card-time {
    font-family: "DejaVu Sans Mono", monospace;
    font-size: 11px;
    color: #94a3b8;
}

.late {
    margin-left: 8px;
    color: #dc2626;
}

.late-ic {
    width: 16px;
    height: 16px;
    color: #1f2937;
}

.card-name {
    margin-top: 9px;
    padding-top: 1px;
    height: 20px;
    font-size: 15px;
    font-weight: 600;
    line-height: 20px;
    white-space: nowrap;
}

.card-phone {
    margin-top: 1px;
    display: flex;
    align-items: center;
    gap: 10px;
    height: 20px;
    font-size: 13px;
    color: #475569;
}

.card-phone .ic {
    width: 17px;
    height: 17px;
    stroke-width: 1.2;
    color: #64748b;
}

.card-addr {
    margin-top: 7px;
    height: 18px;
    font-size: 13px;
    line-height: 18px;
    color: #475569;
    white-space: nowrap;
}

.card-price {
    margin-top: 9px;
    min-height: 24px;
    display: flex;
    align-items: center;
    justify-content: space-between;
}

.card-price strong {
    font-size: 16px;
    font-weight: 600;
    color: #14533f;
    white-space: nowrap;
}

.card-price span {
    font-size: 12px;
    color: #94a3b8;
}

.card-price-wrap {
    justify-content: flex-start;
}

.card-price-wrap span {
    line-height: 17px;
    max-width: 90px;
}

.card-price-first {
    margin-top: 10px;
}

.card-done .card-price strong {
    color: #3a7461;
}

.chips {
    margin-top: 7px;
    display: flex;
    align-items: center;
    gap: 6px;
}

.chips-first {
    margin-top: 0;
}

.chip {
    height: 19px;
    padding: 0 8px;
    display: flex;
    align-items: center;
    border-radius: 10px;
    font-size: 11px;
    font-weight: 600;
    white-space: nowrap;
}

.chip-blue { background: #dbeafe; color: #1d4ed8; }
.chip-amber { background: #fef3c7; color: #b45309; }
.chip-teal { background: #c6e7da; color: #166a50; }
.chip-mint { background: #d1fae5; color: #0f7a5a; }
.chip-gray { background: #edf5f2; color: #4d6b60; }

.chip-src {
    gap: 8px;
    background: #f1f5f9;
    color: #3b82f6;
}

.chip-src .ic {
    width: 17px;
    height: 17px;
    stroke-width: 1.2;
}

.chip-wa {
    color: #10b981;
}

.actions {
    margin-top: 13px;
    display: flex;
    flex-wrap: wrap;
    gap: 8px;
}

.actions-tight {
    margin-top: 12px;
}

.actions-done {
    margin-top: 15px;
    gap: 3px;
}

.act {
    width: 142px;
    height: 44px;
    display: flex;
    align-items: center;
    justify-content: center;
    gap: 5px;
    border-radius: 10px;
    font-size: 14px;
    font-weight: 600;
    color: #f4f6fb;
}

.act .ic {
    width: 15px;
    height: 15px;
}

.act .ic-fire {
    width: 16px;
    height: 17px;
    color: #f8e6d4;
}

.act-blue {
    background: linear-gradient(135deg, #5478d4, #415fc8);
}

.act-green {
    background: linear-gradient(135deg, #3c6d4d, #37533a);
}

.act-dark {
    background: linear-gradient(135deg, #0f4c3a, #0c3d2e);
    box-shadow: 0 6px 10px rgba(15, 76, 58, 0.2);
}

.act-closed {
    width: 105px;
    height: 42px;
    gap: 4px;
    font-size: 13px;
    font-weight: 500;
    color: #4b9a78;
    background: #ece4d6;
}

.hl {
    position: relative;
    outline: 5px solid #f4561a;
    outline-offset: 0;
}

.print {
    width: 44px;
    height: 44px;
    display: flex;
    align-items: center;
    justify-content: center;
    color: #475569;
    background: #f3f4f6;
    border: 1px solid #e5e7eb;
    border-radius: 12px;
}

.print .ic {
    width: 16px;
    height: 16px;
}

.actions-done .print {
    height: 42px;
}

.cancel {
    width: 56px;
    height: 44px;
    display: flex;
    align-items: center;
    justify-content: center;
    color: #b92c3f;
    background: #fef2f2;
    border-radius: 10px;
}

.cancel .ic {
    width: 14px;
    height: 14px;
}

.actions-stretch {
    margin-top: 14px;
    flex-wrap: nowrap;
}

.actions-stretch .print {
    height: auto;
}

.dispatch {
    position: relative;
    width: 142px;
    display: flex;
    flex-direction: column;
    gap: 9px;
}

/* frame sits wider than the stack, so a pseudo element instead of outline */
.dispatch::after {
    content: "";
    position: absolute;
    inset: -4px -8px -4px -8px;
    border: 5px solid #f4561a;
    border-radius: 14px;
    pointer-events: none;
}

.driver {
    height: 45px;
    display: flex;
    align-items: center;
    justify-content: space-between;
    padding: 0 12px 0 16px;
    background: #fde5dc;
    border: 1px solid #f0d8cf;
    border-radius: 10px;
    font-size: 14px;
    color: #5a524c;
}

.driver span {
    width: 86px;
    overflow: hidden;
    white-space: nowrap;
}

.driver .ic {
    width: 12px;
    height: 12px;
    stroke-width: 2.5;
    color: #4b4b4b;
}

.dispatch .act {
    width: 100%;
    height: 43px;
}

.act-strip {
    margin-top: 13px;
    height: 44px;
    border-radius: 10px;
    background: linear-gradient(135deg, #37c090, #2db388);
}

/* tutorial number badges */
.step {
    position: absolute;
    width: 48px;
    height: 48px;
    display: flex;
    align-items: center;
    justify-content: center;
    border: 3px solid #fff;
    border-radius: 50%;
    background: #f4561a;
    color: #fff;
    font-family: "Liberation Sans", sans-serif;
    font-size: 30px;
    font-weight: 700;
    z-index: 4;
}

.step-1 { top: -27px; left: -30px; }
.step-2 { top: -28px; left: 122px; }
.step-3 { top: -28px; left: 126px; }
.step-4 { top: -26px; left: 86px; }
.step-5 { top: -29px; left: -28px; }

.footer {
    height: 60px;
    flex: none;
    display: flex;
    flex-direction: column;
    align-items: center;
    padding-top: 9px;
    color: #f1f5f3;
    background: linear-gradient(100deg, #0e4a39, #1a6b52);
    position: relative;
    z-index: 2;
}

.foot-license {
    display: flex;
    align-items: center;
    gap: 7px;
    height: 18px;
    font-size: 12px;
    font-weight: 500;
    letter-spacing: -0.05px;
    white-space: pre;
}

.foot-license b {
    font-weight: 700;
}

.foot-license .ic {
    width: 12px;
    height: 12px;
    color: #d4a72c;
}

.foot-links {
    margin-top: 4px;
    margin-right: 8px;
    display: flex;
    align-items: center;
    height: 16px;
    font-size: 11px;
    white-space: nowrap;
}

.foot-links i {
    width: 3px;
    height: 3px;
    margin: 0 20px 0 21px;
    border-radius: 50%;
    background: #f1f5f3;
}

.foot-links a {
    color: #d7e8e0;
}

.foot-copy {
    font-weight: 500;
    margin-right: -8px;
}

.foot-ver {
    font-family: "DejaVu Sans Mono", monospace;
    font-size: 11.8px;
    color: #d7e8e0;
}

/* toasts */
.toasts {
    position: absolute;
    top: 80px;
    right: 20px;
    width: 366px;
    z-index: 5;
    display: flex;
    flex-direction: column;
    gap: 14px;
}

.toast {
    background: #fff;
    border-radius: 12px;
    box-shadow: 0 4px 14px rgba(15, 23, 42, 0.1);
}

.toast-head {
    position: relative;
    overflow: hidden;
    height: 72px;
    display: flex;
    align-items: center;
    padding: 0 16px;
    gap: 5px;
    border-radius: 12px 12px 0 0;
    color: #fff;
    background: linear-gradient(100deg, #11503d, #26705a);
}

.toast-head::before {
    content: "";
    position: absolute;
    top: -30px;
    right: -20px;
    width: 90px;
    height: 110px;
    border-radius: 50%;
    background: rgba(255, 255, 255, 0.06);
}

.toast-head::after {
    content: "";
    position: absolute;
    left: -10px;
    bottom: -24px;
    width: 70px;
    height: 60px;
    border-radius: 50%;
    background: rgba(255, 255, 255, 0.05);
}

.toast-head-focus {
    height: 71px;
    padding: 0 12px 0 15px;
    background: linear-gradient(100deg, #365539, #40634a);
}

.toast-check {
    width: 36px;
    height: 36px;
    flex: none;
    display: flex;
    align-items: center;
    justify-content: center;
    border-radius: 10px;
    background: rgba(255, 255, 255, 0.2);
    z-index: 1;
}

.toast-check span {
    width: 17px;
    height: 17px;
    display: flex;
    align-items: center;
    justify-content: center;
    border-radius: 50%;
    background: #fff;
    color: #11503d;
}

.toast-check .ic {
    width: 10px;
    height: 10px;
}

.toast-head-focus .toast-check span {
    background: #fde5dc;
}

.toast-text {
    margin-left: 7px;
    flex: 1;
    display: flex;
    flex-direction: column;
    gap: 5px;
    white-space: nowrap;
    z-index: 1;
}

.toast-text strong {
    font-size: 15.3px;
    font-weight: 600;
    letter-spacing: -0.2px;
}

.toast-text span {
    font-size: 11.5px;
    color: #cfe0da;
}

.toast-btn {
    width: 44px;
    height: 44px;
    flex: none;
    display: flex;
    align-items: center;
    justify-content: center;
    color: #fff;
    background: rgba(255, 255, 255, 0.17);
    border-radius: 10px;
    z-index: 1;
}

.toast-btn .ic {
    width: 16px;
    height: 16px;
}

.toast-focus {
    position: relative;
    margin: 0 4px 0 1px;
    border-radius: 10px;
    outline: 5px solid #f4561a;
}

.toast-msg {
    height: 44px;
    padding: 6px 0 0 16px;
    display: flex;
    align-items: center;
    border-radius: 0 0 10px 10px;
    background: #fde5dc;
    font-size: 14px;
    color: #6b6459;
}

.toast-bar {
    height: 31px;
    padding: 14px 17px 0;
}

.toast-bar span {
    display: block;
    height: 3px;
    border-radius: 2px;
    background: #146047;
}

.toast-fill-1 {
    width: 112px;
}

.toast-bar:not(.toast-bar-2) {
    background: linear-gradient(#f1f5f9, #f1f5f9) 17px 14px / 332px 3px no-repeat;
    border-radius: 0 0 12px 12px;
}

.toast-bar-2 {
    height: 18px;
    padding-top: 3px;
}

.toast-fill-2 {
    width: 272px;
}

.side-handle {
    position: absolute;
    top: 442px;
    right: 0;
    width: 44px;
    height: 66px;
    display: flex;
    align-items: center;
    padding-left: 14px;
    border-radius: 12px 0 0 12px;
    color: #5d8a79;
    background: #7a9f92;
    z-index: 3;
}

.side-handle .ic {
    width: 16px;
    height: 16px;
}

/* demo bar */
.demo-bar {
    height: 64px;
    flex: none;
    display: flex;
    align-items: center;
    padding: 0 20px;
    color: #fff;
    background: linear-gradient(90deg, #16a34a, #15803d);
}

.demo-pill {
    width: 86px;
    height: 30px;
    display: flex;
    align-items: center;
    justify-content: center;
    gap: 6px;
    border-radius: 15px;
    font-size: 11.5px;
    font-weight: 800;
    background: rgba(255, 255, 255, 0.2);
    border: 1px solid rgba(255, 255, 255, 0.25);
}

.demo-pill .ic {
    width: 14px;
    height: 15px;
    color: #0f2a1b;
}

.demo-text {
    margin: 0 0 0 18px;
    flex: 1;
    font-size: 13.2px;
    font-weight: 500;
    letter-spacing: -0.2px;
    white-space: nowrap;
}

.demo-text b {
    font-weight: 700;
}

.demo-btn {
    display: flex;
    align-items: center;
    justify-content: center;
    gap: 7px;
    background: #fff;
    border-radius: 10px;
    font-size: 13px;
    font-weight: 600;
    box-shadow: 0 4px 10px rgba(0, 0, 0, 0.12);
}

.demo-btn .ic {
    width: 17px;
    height: 17px;
    color: #14352a;
}

.demo-create {
    width: 215px;
    height: 44px;
    color: #15803d;
}

.demo-talk {
    width: 244px;
    height: 40px;
    margin-left: 6px;
    color: #14352a;
}

.demo-ghost {
    height: 44px;
    display: flex;
    align-items: center;
    justify-content: center;
    color: #fff;
    background: rgba(255, 255, 255, 0.2);
    border-radius: 8px;
    font-size: 13.5px;
    font-weight: 600;
}

.demo-more {
    width: 116px;
    margin-left: 8px;
    gap: 7px;
}

.demo-more .ic {
    width: 14px;
    height: 14px;
}

.demo-more .ic:first-child {
    width: 16px;
    height: 18px;
    color: #0f2a1b;
    margin-right: 6px;
}

.demo-x {
    width: 44px;
    margin-left: 8px;
    color: #0f3d28;
}

.demo-x .ic {
    width: 13px;
    height: 13px;
}
```
